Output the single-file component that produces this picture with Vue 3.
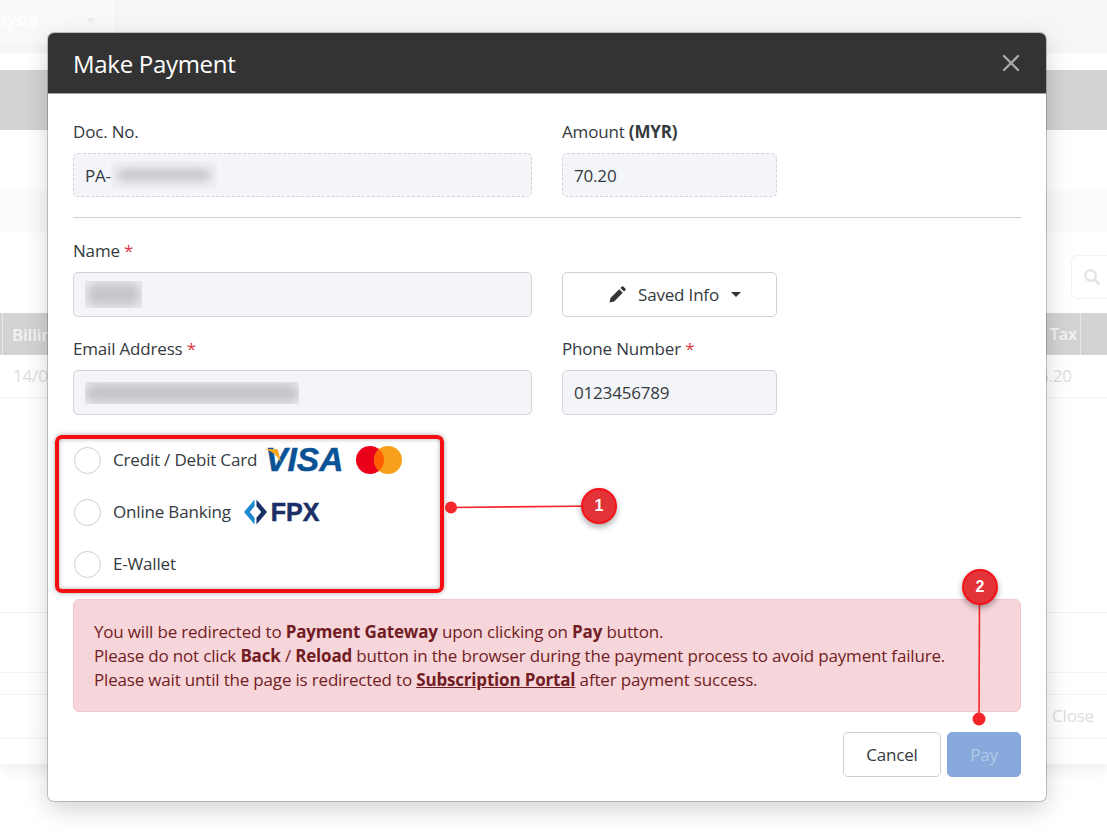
<script setup>
const methods = [
  { id: 'card', label: 'Credit / Debit Card' },
  { id: 'bank', label: 'Online Banking' },
  { id: 'wallet', label: 'E-Wallet' },
];
</script>

<template>
  <div class="page">
    <!-- page behind the dialog, dimmed by the backdrop -->
    <div class="bg">
      <div class="bg-top"><div class="bg-tab"><span>aysia</span><i class="bg-caret"></i></div></div>
      <div class="bg-band"></div>
      <div class="bg-strip"></div>
      <div class="bg-search"><svg width="18" height="18" viewBox="0 0 18 18"><circle cx="7.5" cy="7.5" r="5.2" fill="none" stroke="#e4e4e4" stroke-width="2.4"/><path d="M11.5 11.5l5 5" stroke="#e4e4e4" stroke-width="2.6"/></svg></div>
      <div class="bg-thead"><span class="th-first"></span><span class="th-bill">Billing</span><span class="th-tax">Tax</span><span class="th-last"></span></div>
      <div class="bg-row"><span class="td-date">14/09</span><span class="td-tax">5.20</span></div>
      <div class="bg-foot-line one"></div>
      <div class="bg-foot-line two"></div>
      <div class="bg-close"><span>Close</span></div>
      <div class="bg-card-end"></div>
    </div>

    <div class="modal">
      <header class="modal-head">
        <h1>Make Payment</h1>
        <svg class="modal-x" width="18" height="18" viewBox="0 0 18 18"><path d="M2 2l14 14M16 2L2 16" stroke="#a8a8a8" stroke-width="2.4" stroke-linecap="round"/></svg>
      </header>

      <div class="modal-body">
        <div class="row">
          <div class="field">
            <label>Doc. No.</label>
            <div class="input dashed">PA-<span class="blur-box doc"><span class="blur-ink"></span></span></div>
          </div>
          <div class="field">
            <label>Amount <b>(MYR)</b></label>
            <div class="input dashed">70.20</div>
          </div>
        </div>

        <hr />

        <div class="row row-name">
          <div class="field">
            <label>Name <em>*</em></label>
            <div class="input tall"><span class="blur-box name"><span class="blur-ink"></span></span></div>
          </div>
          <div class="field field-btn">
            <button class="saved">
              <svg width="19" height="19" viewBox="0 0 18 18"><path d="M1.5 16.5l.9-4.300 8.200-8.200 3.400 3.400-8.200 8.200zM11.800 2.800l1.300-1.300a1 1 0 0 1 1.400 0l2 2a1 1 0 0 1 0 1.400l-1.300 1.300z" fill="#333"/></svg>
              <span>Saved Info</span>
              <i class="caret"></i>
            </button>
          </div>
        </div>

        <div class="row row-email">
          <div class="field">
            <label>Email Address <em>*</em></label>
            <div class="input tall"><span class="blur-box email"><span class="blur-ink"></span></span></div>
          </div>
          <div class="field">
            <label>Phone Number <em>*</em></label>
            <div class="input tall">0123456789</div>
          </div>
        </div>

        <div class="methods">
          <div v-for="m in methods" :key="m.id" class="method">
            <span class="radio"></span>
            <span class="method-label">{{ m.label }}</span>
            <span v-if="m.id === 'card'" class="visa">
              VISA
              <svg class="visa-flag" width="17" height="14" viewBox="0 0 17 14"><path d="M0 0h10.500c1.500 0 2.500.8 3 2.500L16 13.500C13 7.500 7.500 2.500 0 0z" fill="#f7a823"/></svg>
            </span>
            <svg v-if="m.id === 'card'" class="mc" width="46" height="28" viewBox="0 0 46 28">
              <circle cx="14" cy="14" r="14" fill="#eb001b"/>
              <circle cx="32" cy="14" r="14" fill="#f79e1b"/>
              <path d="M23 3.300a14 14 0 0 1 0 21.400a14 14 0 0 1 0-21.400z" fill="#ff5f00"/>
            </svg>
            <span v-if="m.id === 'bank'" class="fpx">
              <svg width="24" height="26" viewBox="0 0 25 26">
                <path d="M11 0v7L6 13l5 6v7L0 13z" fill="#1f8ad0"/>
                <path d="M13 0l11 13-11 13v-7l5-6-5-6z" fill="#1c2f66"/>
              </svg>
              <span>FPX</span>
            </span>
          </div>
        </div>

        <div class="alert">
          You will be redirected to <b>Payment Gateway</b> upon clicking on <b>Pay</b> button.<br />
          Please do not click <b>Back</b> / <b>Reload</b> button in the browser during the payment process to avoid payment failure.<br />
          Please wait until the page is redirected to <b><u>Subscription Portal</u></b> after payment success.
        </div>

        <div class="actions">
          <button class="btn-cancel">Cancel</button>
          <button class="btn-pay">Pay</button>
        </div>
      </div>
    </div>

    <!-- tutorial annotations drawn over the dialog -->
    <div class="mark-box"></div>
    <svg class="mark-lines" width="1107" height="838" viewBox="0 0 1107 838">
      <path d="M451 507.500L599 506" stroke="#f5262b" stroke-width="1.600" fill="none"/>
      <circle cx="451" cy="507.500" r="6" fill="#f5262b"/>
      <path d="M979.500 600L979 719" stroke="#f5262b" stroke-width="1.600" fill="none"/>
      <circle cx="979" cy="719" r="6.500" fill="#f5262b"/>
    </svg>
    <div class="badge one">1</div>
    <div class="badge two">2</div>
  </div>
</template>

<style>
html, body { margin: 0; background: #fff; }
</style>

<style scoped>
.page {
  position: relative;
  width: 1107px;
  height: 838px;
  overflow: hidden;
  font-family: "Open Sans", "Noto Sans", "Liberation Sans", sans-serif;
  font-size: 17px;
  color: #343a40;
  background: #fff;
  letter-spacing: -0.18px;
}

/* background page */
.bg { height: 100%; display: flex; flex-direction: column; }
.bg-top { height: 53px; background: #f6f6f6; flex: none; }
.bg-tab {
  width: 114px; height: 43px; background: #f9f9f9; position: relative; overflow: hidden;
}
.bg-tab span { position: absolute; left: -3px; top: 9px; color: #fff; font-weight: 700; font-size: 16px; }
.bg-caret {
  position: absolute; left: 86px; top: 18px;
  border: 5px solid transparent; border-top: 6px solid #efefef; border-bottom: 0;
}
.bg-band { height: 60px; margin-top: 17px; background: #d3d3d3; flex: none; }
.bg-strip { height: 43px; margin-top: 60px; background: #fbfbfb; flex: none; }
.bg-search {
  position: absolute; left: 1071px; top: 255px; width: 50px; height: 44px;
  border: 1px solid #f2f2f2; border-radius: 6px; padding: 12px 0 0 11px; box-sizing: border-box;
}
.bg-thead {
  margin-top: 80px; height: 42px; background: #d3d3d3; flex: none;
  display: flex; align-items: center; color: #f4f4f4; font-weight: 600; position: relative;
}
.th-bill { position: absolute; left: 12px; }
.th-first { position: absolute; left: 2px; top: 0; bottom: 0; border-left: 1px solid #e8e8e8; }
.th-tax { position: absolute; left: 1050px; font-size: 16px; }
.th-last { position: absolute; left: 1080px; top: 0; bottom: 0; border-left: 1px solid #e8e8e8; }
.bg-row {
  height: 42px; border-bottom: 1px solid #f3f3f3; flex: none; position: relative;
  color: #dcdcdc; line-height: 42px;
}
.td-date { position: absolute; left: 13px; }
.td-tax { position: absolute; left: 1039px; }
.bg-foot-line { height: 1px; background: #f2f2f2; flex: none; }
.bg-foot-line.one { margin-top: 214px; }
.bg-foot-line.two { margin-top: 59px; }
.bg-close {
  margin-top: 21px; height: 43px; border-top: 1px solid #f3f3f3; border-bottom: 1px solid #f3f3f3;
  flex: none; position: relative; line-height: 41px; color: #dedede;
}
.bg-close span { position: absolute; left: 1052px; }
.bg-card-end {
  height: 25px; flex: none;
  box-shadow: 0 6px 14px rgba(0, 0, 0, 0.07);
}

/* dialog */
.modal {
  position: absolute;
  left: 48px;
  top: 33px;
  width: 998px;
  height: 768px;
  background: #fff;
  border-radius: 6px;
  overflow: hidden;
  box-shadow: 0 0 0 1px rgba(0, 0, 0, 0.2), 0 8px 24px rgba(0, 0, 0, 0.18);
}
.modal-head {
  height: 61px;
  background: #333;
  border-bottom: 1px solid #a3a3a3;
  box-sizing: border-box;
  padding: 0 25px;
  display: flex;
  align-items: center;
  justify-content: space-between;
}
.modal-head h1 {
  margin: 0;
  color: #fff;
  font-size: 24px;
  font-weight: 400;
  letter-spacing: -0.3px;
}
.modal-x { margin-right: 1px; }
.modal-body { padding: 28px 25px 0; }
.row {
  display: grid;
  grid-template-columns: 459px 215px;
  column-gap: 30px;
}
label { display: block; height: 35px; line-height: 27px; margin-top: -4px; }
label b { font-weight: 700; }
label em { font-style: normal; color: #dc3545; }
.input {
  height: 44px;
  box-sizing: border-box;
  border: 1px solid #d3d3d8;
  border-radius: 5px;
  background: #f4f5f9;
  padding: 0 11px;
  display: flex;
  align-items: center;
}
.input.dashed { border-style: dashed; }
.input.tall { height: 45px; }
.blur-box { display: block; overflow: hidden; background: #f0f1f5; }
.blur-ink { display: block; height: 100%; background: #c4c5c9; filter: blur(5px); border-radius: 6px; }
.blur-box.doc { width: 106px; height: 28px; padding: 8px 6px; box-sizing: border-box; }
.blur-box.name { width: 57px; height: 27px; padding: 3px 3px; box-sizing: border-box; background: #e9eaed; }
.blur-box.email { width: 214px; height: 22px; padding: 2px 1px; box-sizing: border-box; background: #e9eaed; }
hr { border: 0; border-top: 1px solid #d0d0d0; margin: 20px 0 0; }
.row-name { margin-top: 23px; }
.field-btn { padding-top: 31px; }
.row-email { margin-top: 22px; }
.saved {
  width: 215px;
  height: 45px;
  background: #fff;
  border: 1px solid #d0d0d0;
  border-radius: 5px;
  font: inherit;
  letter-spacing: inherit;
  color: #343a40;
  display: flex;
  align-items: center;
  justify-content: center;
  gap: 11px;
  padding: 0 0 0 10px;
}
.caret { border: 5px solid transparent; border-top: 5px solid #333; border-bottom: 0; margin-left: 1px; }

/* payment methods */
.methods { margin-top: 19px; }
.method {
  height: 52px;
  display: flex;
  align-items: center;
  position: relative;
}
.radio {
  width: 27px;
  height: 27px;
  box-sizing: border-box;
  border: 1px solid #ccc;
  border-radius: 50%;
  margin: 0 12px 0 1px;
  flex: none;
}
.method-label { margin-top: -2px; }
.visa {
  position: relative;
  margin-left: 8px;
  color: #0a5296;
  font-family: "Liberation Sans", sans-serif;
  font-weight: 700;
  font-style: italic;
  font-size: 33.500px;
  line-height: 30px;
  letter-spacing: 0;
  -webkit-text-stroke: 0.5px #0a5296;
}
.visa-flag { position: absolute; left: 0; top: 4px; }
.mc { margin-left: 13px; }
.fpx {
  display: flex;
  align-items: center;
  gap: 3px;
  margin-left: 13px;
  color: #1c2f66;
  font-family: "Liberation Sans", sans-serif;
  font-weight: 700;
  font-size: 25px;
  letter-spacing: 0;
  -webkit-text-stroke: 0.5px #1c2f66;
}
.alert {
  margin-top: 9px;
  height: 113px;
  box-sizing: border-box;
  padding: 20px 20px;
  background: #f6d6da;
  border: 1px solid #f3c8cd;
  border-radius: 6px;
  color: #721c24;
  line-height: 24px;
}
.alert b { font-weight: 700; }
.actions {
  margin-top: 20px;
  display: flex;
  justify-content: flex-end;
  gap: 6px;
}
.actions button {
  height: 45px;
  border-radius: 5px;
  font: inherit;
  letter-spacing: inherit;
}
.btn-cancel { width: 98px; background: #fff; border: 1px solid #cfcfcf; color: #343a40; }
.btn-pay { width: 74px; background: #87a9db; border: 1px solid #87a9db; color: #b4c9e8; }

/* annotations */
.mark-box {
  position: absolute;
  left: 55px;
  top: 435px;
  width: 389px;
  height: 158px;
  box-sizing: border-box;
  border: 4px solid #f50d12;
  border-radius: 7px;
  box-shadow: 0 0 5px rgba(0, 0, 0, 0.35), inset 0 0 5px rgba(0, 0, 0, 0.3);
}
.mark-lines { position: absolute; left: 0; top: 0; pointer-events: none; }
.badge {
  position: absolute;
  width: 36px;
  height: 36px;
  box-sizing: border-box;
  border: 2px solid #f5141a;
  border-radius: 50%;
  background: #e23338;
  color: #fff;
  font-family: "Liberation Sans", sans-serif;
  font-weight: 700;
  font-size: 16px;
  letter-spacing: 0;
  line-height: 32px;
  text-align: center;
  box-shadow: 0 3px 6px rgba(0, 0, 0, 0.35);
}
.badge.one { left: 581px; top: 488px; }
.badge.two { left: 962px; top: 569px; }
</style>
